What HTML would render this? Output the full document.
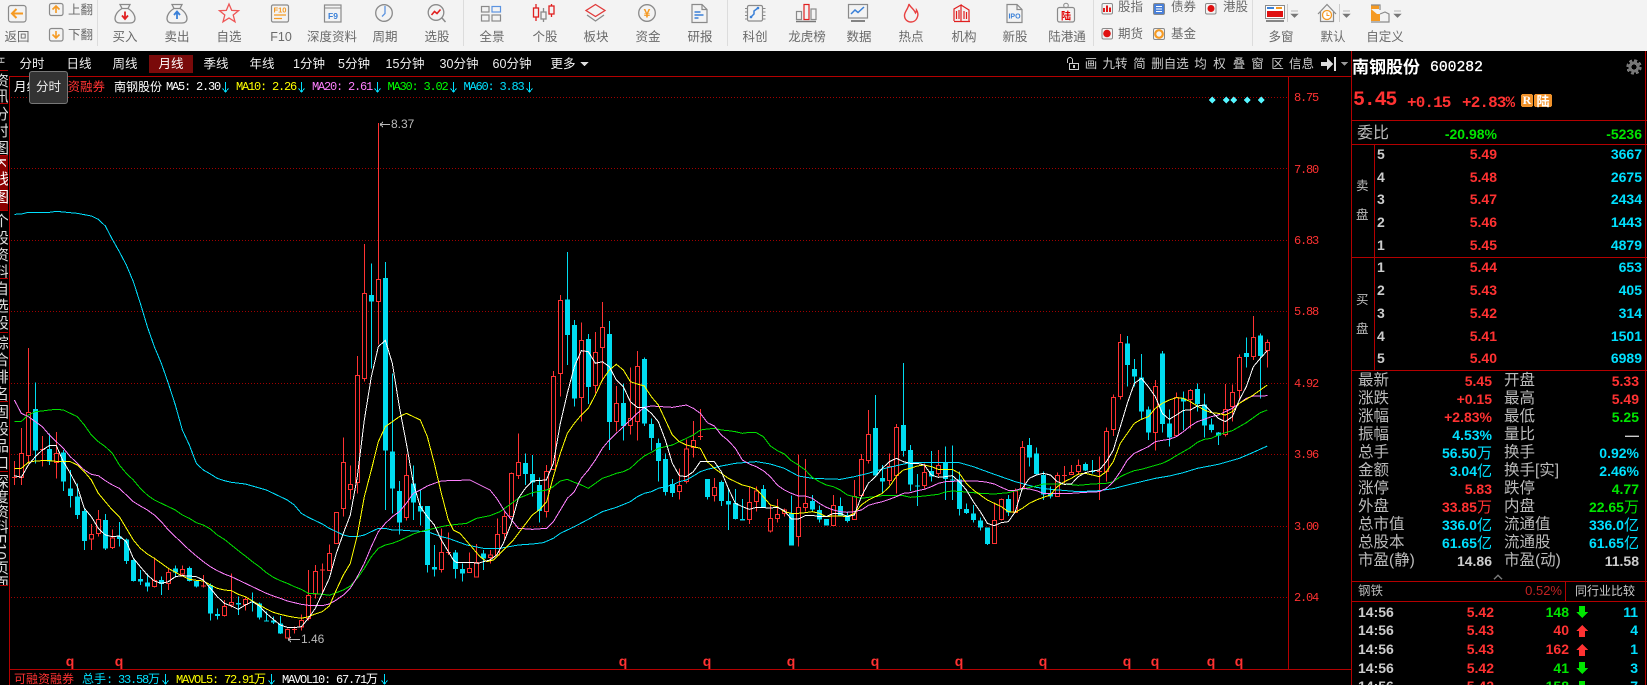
<!DOCTYPE html>
<html><head><meta charset="utf-8"><style>
html,body{margin:0;padding:0;width:1647px;height:685px;overflow:hidden;background:#000}
body{position:relative;font-family:"Liberation Sans","Noto Sans CJK SC",sans-serif;color:#fff}
div,span.a{position:absolute;white-space:nowrap}
#tb{left:0;top:0;width:1647px;height:51px;background:#f3f3f3}
#tb div{color:#6a6a6a;font-size:12.5px;line-height:18px;top:28px;transform:translateX(-50%)}
#tb div.s{top:0;transform:none}
.tab{top:55px;line-height:18px;font-size:12.5px;color:#f0f0f0;transform:translateX(-50%)}
.tool{top:55px;line-height:18px;font-size:12.5px;color:#ccc;transform:translateX(-50%)}
.m{font-family:"Liberation Mono","Noto Sans CJK SC",monospace;font-size:12px;letter-spacing:-1.2px;line-height:14px;top:80px}
.ax{font-family:"Liberation Mono",monospace;font-size:12px;letter-spacing:-1.2px;line-height:14px;left:1294px;color:#ff3232}
.q{top:654px;color:#ff3232;font-weight:bold;font-size:14px;line-height:14px;transform:translateX(-50%)}
.st{top:672px;font-size:12px;line-height:14px;font-family:"Liberation Mono","Noto Sans CJK SC",monospace;letter-spacing:-1.2px}
.st u{text-decoration:none;letter-spacing:0;font-family:"Noto Sans CJK SC",sans-serif}
.b{font-weight:bold;font-size:14px;line-height:18px}
.r{color:#ff3232}.c{color:#00e0ff}.g{color:#00e600}.w{color:#ccc}
.l{font-size:15.5px;line-height:18px;color:#bbb;left:1358px}
.l2{font-size:15.5px;line-height:18px;color:#bbb;left:1504px}
.b i{font-style:normal;font-weight:normal;font-size:15px}
#lb{left:0;top:51px;width:8px;height:540px;overflow:hidden}
.vt{left:0;width:8px;overflow:hidden;border-bottom:1px solid #b40000;box-sizing:border-box;color:#ddd;font-size:15px}
.vt span{position:absolute;left:-7px;top:2px;writing-mode:vertical-rl;line-height:15px;white-space:nowrap}
</style></head><body>
<svg width="1647" height="685" style="position:absolute;left:0;top:0" xmlns="http://www.w3.org/2000/svg" shape-rendering="crispEdges">
<g stroke="#a00000" stroke-dasharray="1 2" stroke-width="1">
<path d="M11 97.5H1288M11 168.5H1288M11 240.5H1288M11 311.5H1288M11 383.5H1288M11 454.5H1288M11 526.5H1288M11 597.5H1288"/>
</g>
<g stroke="#b40000" stroke-width="1" fill="none">
<path d="M9.5 76V685M9 76.5H1351M1288.5 76V669M9 669.5H1351M1351.5 51V685M1645.5 51V685M1351 120.5H1647M1351 144.5H1647M1351 257.5H1647M1351 370.5H1647M1374.5 144V370M1351 581.5H1647M1351 601.5H1647M1565.5 581V601"/>
</g>
<!-- zoom-6 candles -->
<g transform="translate(0 200) scale(.33333)">
<path fill="none" stroke="#ff3232" stroke-width="3" d="M43 783V855M36 833h15M64 684V855M85 444V790M127 708V800M120 748h15M169 696V836M274 972V1050M295 930V1010M337 988V1047M463 1073V1163M505 1105V1170M547 1097V1130M610 1125V1163M603 1158h15M673 1200V1250M694 1120V1222M736 1190V1232M862 1285V1316M883 1280V1300M876 1288h15M904 1243V1292M925 1110V1262M946 1095V1195M967 1090V1182M960 1110h15M988 1033V1112M1009 937V1031M1030 712V950M1051 797V898M1072 468V880M1093 132V545M1135 -231V433M1219 762V962M1324 985V1118M1345 997V1065M1338 1057h15"/>
<path fill="#000" stroke="#ff3232" stroke-width="3" d="M58 760h12v73h-12zM79 637h12v130h-12zM163 760h12v27h-12zM268 1003h12v14h-12zM289 958h12v43h-12zM331 1014h12v29h-12zM457 1141h12v19h-12zM499 1118h12v32h-12zM541 1108h12v14h-12zM667 1220h12v26h-12zM688 1208h12v7h-12zM730 1198h12v16h-12zM856 1288h12v26h-12zM898 1262h12v19h-12zM919 1187h12v68h-12zM940 1114h12v68h-12zM982 1060h12v51h-12zM1003 937h12v94h-12zM1024 787h12v138h-12zM1045 853h12v15h-12zM1066 527h12v321h-12zM1087 281h12v255h-12zM1129 238h12v66h-12zM1213 826h12v127h-12zM1318 1057h12v52h-12z"/>
<path fill="none" stroke="#00dcf0" stroke-width="3" d="M106 548V790M148 700V795M190 750V873M211 810V923M232 850V957M253 925V1050M316 942V1050M358 966V1040M379 1015V1092M400 1078V1145M421 1110V1155M442 1120V1175M484 1130V1185M526 1097V1133M568 1100V1145M589 1140V1162M631 1150V1262M652 1225V1258M715 1190V1245M757 1177V1235M778 1208V1258M799 1235V1265M820 1250V1272M841 1248V1302M1114 190V505M1156 186V930M1177 520V940M1198 843V1003M1240 796V960M1261 870V977M1282 918V1118M1303 1035V1130"/>
<path fill="none" stroke="#00dcf0" stroke-width="15" d="M106 627V752M148 747V785M190 757V845M211 865V888M232 890V945M253 933V1023M316 960V1045M358 1010V1017M379 1018V1083M400 1080V1143M421 1137V1145M442 1147V1160M484 1140V1152M526 1105V1117M568 1104V1143M589 1143V1160M631 1155V1241M652 1242V1248M715 1209V1214M757 1204V1208M778 1210V1252M799 1261V1264M820 1261V1267M841 1270V1301M1114 285V305M1156 234V752M1177 754V866M1198 873V968M1240 850V908M1261 918V935M1282 918V1095M1303 1101V1109"/>
</g>
<!-- zoom-7 candles -->
<g transform="translate(450 100) scale(.33333)">
<path fill="none" stroke="#ff3232" stroke-width="3" d="M58 1358V1418M79 1332V1431M121 1350V1390M142 1255V1365M163 1235V1320M184 1117V1250M205 1000V1137M289 1095V1253M310 813V1110M331 585V890M394 667V965M436 696V880M457 606V843M499 858V995M541 803V1003M562 753V1022M688 1105V1198M709 1018V1150M730 963V1073M751 927V1020M744 1010h15M793 1134V1205M898 1160V1272M919 1160V1235M961 1215V1298M982 1197V1268M1003 1225V1250M1045 1063V1340M1066 1077V1235M1150 1185V1277M1213 1140V1258M1234 1062V1190M1255 930V1090M1318 1060V1155M1339 972V1180"/>
<path fill="#000" stroke="#ff3232" stroke-width="3" d="M52 1405h12v13h-12zM73 1388h12v43h-12zM115 1365h12v8h-12zM136 1303h12v62h-12zM157 1250h12v50h-12zM178 1120h12v130h-12zM199 1087h12v40h-12zM283 1114h12v121h-12zM304 829h12v279h-12zM325 601h12v220h-12zM388 721h12v172h-12zM430 757h12v100h-12zM451 682h12v61h-12zM493 910h12v55h-12zM535 955h12v22h-12zM556 799h12v166h-12zM682 1156h12v18h-12zM703 1047h12v97h-12zM724 1021h12v21h-12zM787 1162h12v25h-12zM892 1207h12v51h-12zM913 1173h12v32h-12zM955 1255h12v38h-12zM976 1243h12v13h-12zM997 1230h12v10h-12zM1039 1222h12v88h-12zM1060 1210h12v13h-12zM1144 1216h12v61h-12zM1207 1190h12v68h-12zM1228 1078h12v109h-12zM1249 1003h12v79h-12zM1312 1100h12v41h-12zM1333 982h12v145h-12z"/>
<path fill="none" stroke="#00dcf0" stroke-width="3" d="M16 1350V1435M37 1390V1445M100 1350V1410M226 1060V1155M247 1065V1190M268 1132V1268M352 456V795M373 660V920M415 702V912M478 663V1050M520 850V1022M583 772V978M604 955V1052M625 1015V1145M646 1060V1187M667 1137V1191M772 1137V1198M814 1142V1218M835 1168V1290M856 1167V1258M877 1197V1262M940 1155V1222M1024 1187V1337M1087 1185V1235M1108 1217V1268M1129 1257V1277M1171 1192V1250M1192 1235V1268M1276 885V1127M1297 1095V1180"/>
<path fill="none" stroke="#00dcf0" stroke-width="15" d="M16 1357V1407M37 1407V1420M100 1360V1375M226 1089V1122M247 1122V1148M268 1155V1233M352 598V705M373 675V896M415 717V861M478 702V966M520 909V978M583 777V970M604 972V1014M625 1029V1083M646 1077V1176M667 1152V1179M772 1137V1191M814 1146V1203M835 1203V1214M856 1209V1257M877 1257V1261M940 1167V1222M1024 1240V1337M1087 1203V1228M1108 1230V1258M1129 1257V1277M1171 1218V1246M1192 1245V1263M1276 984V1127M1297 1134V1145"/>
</g>
<!-- zoom-8 candles -->
<g transform="translate(880 280) scale(.33333)">
<path fill="none" stroke="#ff3232" stroke-width="3" d="M133 550V625M175 510V590M343 668V792M364 655V722M406 625V698M427 483V630M532 578V650M553 558V610M546 587h15M574 555V585M595 538V585M658 530V660M651 575h15M679 442V605M700 343V468M721 162V358M826 300V512M889 337V470M931 327V445M1036 312V470M1057 313V425M1078 223V360M1120 108V240M1162 178V263"/>
<path fill="#000" stroke="#ff3232" stroke-width="3" d="M127 577h12v40h-12zM169 556h12v25h-12zM337 721h12v70h-12zM358 658h12v61h-12zM400 633h12v64h-12zM421 502h12v125h-12zM526 586h12v64h-12zM568 577h12v6h-12zM589 556h12v19h-12zM673 455h12v120h-12zM694 352h12v96h-12zM715 187h12v163h-12zM820 320h12v138h-12zM883 353h12v114h-12zM925 331h12v27h-12zM1030 388h12v75h-12zM1051 338h12v42h-12zM1072 232h12v99h-12zM1114 172h12v58h-12zM1156 187h12v25h-12z"/>
<path fill="none" stroke="#00dcf0" stroke-width="3" d="M70 249V530M91 495V633M112 582V678M105 618h15M154 513V605M196 500V660M217 497V660M210 600h15M238 575V707M259 670V702M280 675V728M301 712V752M322 745V795M385 645V708M448 474V560M469 502V587M490 575V660M511 620V655M616 547V573M637 540V580M630 575h15M742 168V320M763 237V320M784 222V420M805 380V480M847 213V458M868 388V500M910 335V450M952 310V395M973 340V473M994 415V458M1015 456V495M1099 172V263M1141 160V355"/>
<path fill="none" stroke="#00dcf0" stroke-width="15" d="M70 435V513M91 510V614M154 573V590M196 547V597M238 598V687M259 687V699M280 700V720M301 721V743M322 742V792M385 657V697M448 495V533M469 520V582M490 585V643M511 640V650M616 552V572M742 190V255M763 267V290M784 292V395M805 388V458M847 220V432M868 430V473M910 355V365M952 327V372M973 373V437M994 433V450M1015 457V466M1099 219V231M1141 166V228"/>
</g>
<!-- MA lines -->
<g fill="none" stroke-width="3">
<g transform="translate(0 200) scale(.33333)">
<polyline stroke="#00e0ff" points="43,43 64,42 85,37 106,37 148,37 169,34 190,36 232,40 274,48 295,58 316,78 337,118 358,155 379,195 400,245 421,310 442,380 463,440 484,490 505,550 526,615 547,690 568,735 589,790 610,810 631,822 652,835 673,842 694,847 736,852 757,858 778,864 799,870 820,880 841,890 862,900 883,915 904,940 925,952 946,962 967,972 988,985 1009,995 1030,1005 1051,1010 1072,1010 1093,1005 1114,995 1135,985 1156,985 1177,990 1198,990 1240,993 1282,995 1324,1010 1345,1015"/>
<polyline stroke="#00e000" points="43,664 64,664 85,645 106,635 127,633 148,630 169,628 190,630 211,640 232,650 253,675 274,705 295,725 316,740 337,760 358,795 379,820 400,840 421,865 442,885 463,900 484,910 505,920 526,930 547,945 568,955 589,968 610,975 631,987 652,1005 673,1018 694,1035 715,1052 736,1068 757,1085 778,1100 799,1118 820,1132 841,1142 862,1150 883,1160 904,1168 925,1180 946,1181 967,1183 988,1186 1009,1178 1030,1170 1051,1158 1072,1135 1093,1105 1114,1070 1135,1045 1156,1035 1177,1030 1198,1022 1219,1012 1240,1002 1261,995 1282,990 1303,985 1324,980 1345,976"/>
<polyline stroke="#ff80ff" points="43,600 64,640 85,650 106,665 127,680 148,705 169,725 190,745 211,770 232,790 253,810 274,823 295,827 316,842 337,855 358,865 379,885 400,905 421,918 442,930 463,945 484,965 505,990 526,1010 547,1030 568,1050 589,1068 610,1085 631,1100 652,1112 673,1122 694,1130 715,1140 736,1150 757,1160 778,1170 799,1180 820,1188 841,1195 862,1203 883,1208 904,1213 925,1216 946,1217 967,1217 988,1212 1009,1200 1030,1185 1051,1165 1072,1130 1093,1090 1114,1040 1135,995 1156,970 1177,950 1198,935 1219,910 1240,880 1261,870 1282,858 1303,850 1324,843 1345,842"/>
<polyline stroke="#ffff00" points="43,805 64,805 85,787 106,783 127,782 148,782 169,784 190,784 211,785 232,795 253,815 274,840 295,880 316,905 337,930 358,950 379,985 400,1020 421,1045 442,1062 463,1075 484,1090 505,1105 526,1117 547,1128 568,1138 589,1141 610,1143 631,1155 652,1165 673,1170 694,1172 715,1183 736,1190 757,1203 778,1215 799,1227 820,1237 841,1243 862,1248 883,1252 904,1255 925,1250 946,1242 967,1235 988,1218 1009,1170 1030,1125 1051,1090 1072,1005 1093,890 1114,810 1135,725 1156,680 1177,665 1198,650 1219,640 1240,650 1261,660 1282,710 1303,790 1324,880 1345,960"/>
<polyline stroke="#ffffff" points="43,827 64,832 85,795 106,770 127,750 148,737 169,737 190,785 211,820 232,860 253,925 274,950 295,985 316,1005 337,1010 358,1008 379,1025 400,1075 421,1100 442,1125 463,1143 484,1150 505,1145 526,1130 547,1127 568,1128 589,1130 610,1140 631,1165 652,1190 673,1210 694,1218 715,1228 736,1215 757,1205 778,1218 799,1240 820,1258 841,1275 862,1282 883,1283 904,1280 925,1255 946,1225 967,1180 988,1135 1009,1060 1030,1000 1051,945 1072,830 1093,660 1114,530 1135,440 1156,421 1177,490 1198,620 1219,730 1240,850 1261,920 1282,950 1303,975 1324,1020 1345,1055"/>
</g>
<g transform="translate(450 100) scale(.33333)">
<polyline stroke="#00e0ff" points="-5,1315 50,1335 100,1345 150,1345 205,1335 247,1332 280,1328 310,1315 331,1300 373,1280 415,1258 457,1235 499,1222 541,1205 562,1190 583,1180 604,1175 625,1165 667,1155 688,1145 709,1140 730,1128 751,1115 772,1108 814,1098 856,1090 919,1085 961,1092 1003,1105 1045,1128 1087,1135 1171,1138 1213,1130 1255,1120 1297,1107 1339,1097"/>
<polyline stroke="#00e000" points="-5,1276 50,1270 80,1255 120,1247 150,1235 185,1210 205,1195 247,1178 290,1170 310,1160 331,1143 352,1138 373,1147 394,1155 415,1165 436,1150 457,1135 478,1128 499,1120 520,1115 541,1105 562,1085 583,1068 604,1057 625,1045 646,1040 667,1035 688,1025 709,1015 730,1005 751,990 772,987 793,985 814,990 835,992 856,995 877,1000 898,997 919,998 940,1010 961,1038 982,1052 1003,1062 1024,1082 1045,1095 1066,1110 1087,1132 1108,1145 1129,1155 1150,1160 1171,1170 1192,1185 1213,1190 1234,1195 1255,1192 1276,1190 1297,1187 1339,1187"/>
<polyline stroke="#ff80ff" points="-5,1142 60,1140 80,1150 120,1170 140,1195 165,1235 205,1285 247,1288 290,1285 310,1265 331,1230 352,1195 373,1175 394,1135 415,1110 436,1080 457,1045 478,1020 499,1000 520,980 541,960 562,940 583,922 604,918 667,922 709,915 730,925 751,940 772,968 793,978 814,1005 835,1022 856,1045 877,1080 898,1092 919,1100 940,1112 961,1130 982,1155 1003,1170 1024,1180 1045,1188 1066,1188 1087,1195 1108,1210 1129,1222 1150,1230 1171,1235 1192,1237 1213,1235 1234,1230 1255,1216 1276,1210 1297,1205 1318,1198 1339,1190"/>
<polyline stroke="#ffff00" points="-5,1260 10,1290 30,1300 60,1335 90,1370 110,1385 130,1380 160,1350 190,1320 205,1300 247,1245 270,1228 290,1205 310,1130 331,1060 352,1000 373,970 394,945 415,925 436,885 457,840 478,810 499,793 520,810 541,845 562,852 583,858 604,890 625,915 646,960 667,1005 688,1025 709,1035 730,1040 751,1045 772,1085 793,1105 814,1120 835,1135 856,1145 877,1155 898,1160 919,1168 940,1190 961,1215 982,1220 1003,1235 1024,1240 1045,1240 1066,1238 1087,1235 1108,1240 1129,1250 1150,1248 1171,1248 1192,1250 1213,1240 1234,1215 1255,1200 1276,1190 1297,1180 1318,1160 1339,1130"/>
<polyline stroke="#ffffff" points="-5,1355 10,1380 20,1388 70,1388 85,1390 100,1385 120,1380 140,1365 160,1330 184,1270 205,1195 226,1165 247,1143 289,1140 310,1090 331,970 352,880 373,800 394,752 415,755 436,790 457,785 478,800 499,840 520,860 541,905 562,922 583,922 604,940 625,965 646,1020 667,1090 688,1127 709,1130 730,1115 751,1085 793,1085 814,1115 835,1165 856,1210 877,1220 898,1228 919,1222 961,1224 982,1222 1003,1232 1024,1257 1045,1257 1066,1247 1087,1246 1108,1250 1129,1250 1150,1240 1171,1240 1192,1250 1213,1245 1234,1190 1255,1150 1276,1130 1297,1105 1318,1085 1339,1075"/>
</g>
<g transform="translate(880 280) scale(.33333)">
<polyline stroke="#00e0ff" points="49,557 91,548 133,548 175,548 217,548 238,548 280,560 343,583 406,605 469,622 511,628 595,635 658,632 700,626 742,615 784,605 826,595 868,588 910,578 952,565 1015,553 1078,535 1120,517 1162,498"/>
<polyline stroke="#00e000" points="49,647 70,647 91,652 133,648 175,643 196,636 217,633 259,636 301,640 343,642 385,638 406,632 427,628 448,622 469,618 490,612 511,612 553,612 595,616 637,612 679,610 700,605 721,590 742,580 763,572 784,568 805,562 826,556 847,550 868,540 889,527 910,515 931,503 952,487 973,478 994,475 1015,465 1036,458 1057,452 1078,440 1099,428 1120,413 1141,398 1162,390"/>
<polyline stroke="#ff80ff" points="49,650 70,640 91,638 112,632 133,628 154,620 175,610 196,605 238,603 280,603 301,604 322,607 343,612 364,622 385,631 406,631 427,625 448,627 469,632 490,640 532,640 574,640 616,637 658,635 679,625 700,605 721,575 742,540 763,520 784,510 805,500 826,485 847,481 868,478 889,470 910,455 931,438 952,425 973,418 994,410 1015,405 1036,395 1057,385 1078,370 1099,355 1120,348 1141,348 1162,347"/>
<polyline stroke="#ffff00" points="49,588 70,570 91,565 112,558 133,555 154,560 175,568 196,568 217,568 238,580 259,610 280,630 301,645 322,660 343,670 364,680 385,695 406,697 427,685 448,670 469,660 490,652 511,645 532,620 553,605 574,595 595,582 616,580 637,585 658,590 679,575 700,545 721,490 742,460 763,430 784,418 805,410 826,385 847,370 868,360 889,353 910,355 931,365 952,378 973,390 994,398 1015,400 1036,405 1057,395 1078,370 1099,358 1120,345 1141,330 1162,315"/>
<polyline stroke="#ffffff" points="49,535 70,545 91,550 112,550 133,555 154,585 175,592 196,590 217,587 238,605 259,630 280,665 301,695 322,730 343,737 364,728 385,725 406,695 427,625 448,595 469,585 490,580 511,585 532,605 553,613 574,612 595,590 616,578 637,573 658,570 679,545 700,510 721,440 742,370 763,310 784,295 805,320 826,350 847,400 868,418 889,405 910,391 931,390 952,378 973,375 994,395 1015,415 1036,425 1057,410 1078,360 1099,320 1120,260 1141,235 1162,212"/>
</g>
</g>
<!-- high/low markers -->
<path d="M380 124.5h10M380 124.5l3-2.5M380 124.5l3 2.5M288 639.5h12M288 639.5l3-2.5M288 639.5l3 2.5" stroke="#bbb" fill="none"/>
<!-- diamonds -->
<path fill="#55f5ff" d="M1212 96.5l3.5 3.5-3.5 3.5-3.5-3.5zM1226 96.5l3.5 3.5-3.5 3.5-3.5-3.5zM1233.5 96.5l3.5 3.5-3.5 3.5-3.500-3.500zM1247 96.5l3.5 3.5-3.5 3.5-3.5-3.5zM1261 96.5l3.5 3.5-3.5 3.5-3.5-3.5z"/>
<!-- header arrows -->
<g fill="none" stroke-width="1">
<path stroke="#00e0ff" d="M225.5 82v10M222.5 88.5l3 3.5 3-3.5M301.5 82v10M298.5 88.5l3 3.5 3-3.5M377.5 82v10M374.5 88.5l3 3.5 3-3.5M453.5 82v10M450.5 88.5l3 3.5 3-3.5M529.5 82v10M526.5 88.5l3 3.5 3-3.5M165.5 674v10M162.5 680.5l3 3.5 3-3.5M271.5 674v10M268.5 680.5l3 3.5 3-3.5M384.5 674v10M381.5 680.5l3 3.5 3-3.5"/>
</g>
<!-- lock -->
<path d="M1067.5 63v-3a2.500 2.500 0 0 1 5 0v3" fill="none" stroke="#ccc"/>
<rect x="1069.500" y="63.500" width="9" height="6" fill="none" stroke="#ccc"/>
<rect x="1073" y="65" width="2" height="3" fill="#ccc"/>
<path d="M1321 62h6v-4l6 6-6 6v-4h-6zM1334 57h2v14h-2z" fill="#ddd"/>
<path d="M1341 62h7l-3.5 4z" fill="#999"/>
<path d="M580 62h9l-4.500 4z" fill="#ddd" />
<!-- gear -->
<circle cx="1634" cy="67" r="4" fill="none" stroke="#777" stroke-width="3"/>
<circle cx="1634" cy="67" r="6.500" fill="none" stroke="#777" stroke-width="2.500" stroke-dasharray="3 2.100"/>
<!-- chevron -->
<path d="M1494 579l4-3.500 4 3.500" fill="none" stroke="#777" stroke-width="1.500"/>
<!-- tick arrows -->
<path fill="#00e600" d="M1579 606h6v6h3l-6 6-6-6h3zM1579 662h6v6h3l-6 6-6-6h3z"/>
<path fill="#ff3232" d="M1582 625l6 6h-3v6h-6v-6h-3zM1582 644l6 6h-3v6h-6v-6h-3z"/>
<path fill="#00e600" d="M1579 681h6v4h-6z"/>
<!-- price tags -->
<rect x="1521" y="94" width="12" height="13" rx="2" fill="#f0922b"/>
<rect x="1534" y="94" width="18" height="13" rx="2" fill="#f0922b"/>
</svg>

<div style="left:1521px;top:93px;width:12px;text-align:center;font:bold 12px/15px 'Liberation Serif',serif;color:#fff">R</div>
<div style="left:1534px;top:93px;width:18px;text-align:center;font:bold 13px/15px 'Noto Sans CJK SC',sans-serif;color:#fff">陆</div>

<div id="tb">
<svg width="1647" height="51" style="position:absolute;left:0;top:0" xmlns="http://www.w3.org/2000/svg">
<g fill="none" stroke="#8a8a8a" stroke-width="1.200">
<rect x="8.500" y="5.500" width="17.500" height="16.500" rx="2.500"/>
<rect x="49.500" y="3.500" width="13.500" height="12" rx="2"/>
<rect x="49.500" y="28.500" width="13.500" height="12.500" rx="2"/>
</g>
<g fill="none" stroke="#f59a23" stroke-width="2">
<path d="M23 13.500H12M16.500 9l-4.500 4.500 4.500 4.500"/>
<path d="M56 13V6.500M52.500 9.500L56 6l3.500 3.500" stroke-width="1.600"/>
<path d="M56 31v6.500M52.500 34.500L56 38l3.500-3.500" stroke-width="1.600"/>
</g>
<path d="M97.500 0v46M463.500 0v46M727.500 0v46M1093.500 0v46M1252.500 0v46" stroke="#dcdcdc" fill="none"/>
<!-- bags -->
<g fill="none" stroke="#8a8a8a" stroke-width="1.300">
<path d="M120 4.500h10l-2 4c5 3 7 7 7 10 0 3-2 4.500-5 4.500h-10c-3 0-5-1.500-5-4.500 0-3 2-7 7-10zM122 8.500h6"/>
<path d="M172 4.500h10l-2 4c5 3 7 7 7 10 0 3-2 4.500-5 4.500h-10c-3 0-5-1.500-5-4.500 0-3 2-7 7-10zM174 8.500h6"/>
</g>
<path d="M125 11.500v7M122 15.500l3 3.500 3-3.500" stroke="#e02020" stroke-width="1.800" fill="none"/>
<path d="M177 19v-7M174 15l3-3.500 3 3.500" stroke="#3a80d8" stroke-width="1.800" fill="none"/>
<!-- star -->
<polygon points="229,4 231.700,10.400 238.500,10.700 233.200,15 235,21.800 229,18 223,21.800 224.800,15 219.500,10.700 226.300,10.400" fill="none" stroke="#ee5555" stroke-width="1.300"/>
<!-- F10 -->
<rect x="271.500" y="5" width="17" height="17" rx="1.500" fill="none" stroke="#8a8a8a" stroke-width="1.200"/>
<text x="280" y="12.500" font-family="Liberation Sans" font-size="7.500" font-weight="bold" fill="#f59a23" text-anchor="middle">F10</text>
<path d="M274 15h12M274 18.500h8" stroke="#f59a23" fill="none" stroke-width="1.200"/>
<!-- F9 -->
<rect x="324.500" y="5" width="16.500" height="17" fill="none" stroke="#8a8a8a" stroke-width="1.200"/>
<path d="M324.500 8h16.500" stroke="#8a8a8a"/>
<text x="333" y="19" font-family="Liberation Sans" font-size="8.500" font-weight="bold" fill="#3a80d8" text-anchor="middle">F9</text>
<!-- clock -->
<circle cx="384" cy="13" r="8.300" fill="none" stroke="#8a8a8a" stroke-width="1.300"/>
<path d="M385 6v7.500l-3 3" stroke="#5b93e0" fill="none" stroke-width="1.300"/>
<!-- magnifier -->
<circle cx="436" cy="12.500" r="7.800" fill="none" stroke="#8a8a8a" stroke-width="1.300"/>
<path d="M442 18l3.500 4" stroke="#8a8a8a" stroke-width="1.500"/>
<path d="M431.500 15l3-3.500 2.500 2 3.500-4" stroke="#e02020" stroke-width="1.600" fill="none"/>
<!-- overview -->
<g fill="none" stroke="#8a8a8a" stroke-width="1.200">
<rect x="481.500" y="6.500" width="7.500" height="5.500"/><rect x="481.500" y="15" width="7.500" height="6"/><rect x="492" y="15" width="8.500" height="6"/>
<rect x="492" y="6.500" width="8.500" height="5.500" stroke="#5b93e0"/>
</g>
<!-- candles -->
<g fill="none" stroke-width="1.300">
<path d="M536 4v4M536 17v4M551.500 4v2M551.500 14v3" stroke="#e02020"/><rect x="533.500" y="8" width="5" height="9" stroke="#e02020"/>
<path d="M543.500 8v4M543.500 19v3" stroke="#8a8a8a"/><rect x="541" y="12" width="5" height="7" stroke="#8a8a8a"/>
<rect x="549" y="6" width="5" height="8" stroke="#e02020"/>
</g>
<!-- layers -->
<path d="M595.500 4.500l9.500 6-9.500 6-9.500-6z" fill="none" stroke="#e23a3a" stroke-width="1.300"/>
<path d="M587 15l8.500 6 8.500-6" fill="none" stroke="#8a8a8a" stroke-width="1.300"/>
<!-- coin -->
<circle cx="647" cy="13" r="8.300" fill="none" stroke="#8a8a8a" stroke-width="1.300"/>
<text x="647" y="17.500" font-family="Liberation Sans" font-size="12" font-weight="bold" fill="#f59a23" text-anchor="middle">¥</text>
<!-- report -->
<path d="M692 4.500h10l5 5v13h-15z M702 4.500v5h5" fill="none" stroke="#8a8a8a" stroke-width="1.200"/>
<path d="M694.500 12h6M694.500 15h9M694.500 18h4" stroke="#3a80d8" stroke-width="1.500" fill="none"/>
<!-- chip -->
<rect x="747.500" y="5.500" width="15" height="15.500" rx="1.500" fill="none" stroke="#8a8a8a" stroke-width="1.200"/>
<path d="M745 8.500h2.500M745 12h2.500M745 15.500h2.500M745 19h2.500M763 8.500h2.500M763 12h2.500M763 15.500h2.500M763 19h2.500" stroke="#8a8a8a"/>
<path d="M751 17l3-3v-3l4-3" stroke="#3a80d8" stroke-width="1.500" fill="none"/>
<circle cx="751" cy="17" r="1.300" fill="#3a80d8"/><circle cx="758" cy="8" r="1.300" fill="#3a80d8"/>
<!-- dragon bars -->
<g fill="none" stroke-width="1.200">
<rect x="796.500" y="11.500" width="5" height="8" stroke="#8a8a8a"/><rect x="804" y="4.500" width="5" height="15" stroke="#e02020"/><rect x="811" y="9" width="5" height="10.500" stroke="#8a8a8a"/>
</g>
<path d="M796 21.500h20" stroke="#777" stroke-width="1.600"/>
<!-- monitor -->
<rect x="848.500" y="4.500" width="19" height="13.500" fill="none" stroke="#8a8a8a" stroke-width="1.200"/>
<path d="M851 14l4-4 3 2.500 6-5.500" fill="none" stroke="#3a80d8" stroke-width="1.500"/>
<path d="M851 21h14" stroke="#777" stroke-width="1.800"/>
<!-- flame -->
<path d="M909 4c1 3 5 5 6.500 9 .8-1 1-2 1-3 2 3 1.500 6 .5 8-1 2.500-3.500 4-6 4-3.500 0-6.500-2.500-6.500-6.500 0-4 3.500-6 4.500-11.500z" fill="none" stroke="#e84040" stroke-width="1.400"/>
<!-- building -->
<g fill="none" stroke="#e02020" stroke-width="1.200">
<path d="M954 21V9l7-4v16M961 5l8 5v11M954 21.500h16"/>
<path d="M956.500 11v8M959 10v9M964 11v8M966.500 12v7"/>
</g>
<!-- IPO -->
<path d="M1007 4.500h10l5 5v13h-15z M1017 4.500v5h5" fill="none" stroke="#8a8a8a" stroke-width="1.200"/>
<text x="1014.500" y="18.500" font-family="Liberation Sans" font-size="7" font-weight="bold" fill="#3a80d8" text-anchor="middle">IPO</text>
<!-- lugangtong -->
<rect x="1057.500" y="7.500" width="17" height="14.500" rx="2" fill="none" stroke="#8a8a8a" stroke-width="1.200"/>
<circle cx="1066" cy="5.500" r="2.300" fill="none" stroke="#8a8a8a"/>
<text x="1066" y="19.500" font-family="Noto Sans CJK SC" font-size="10" font-weight="bold" fill="#e00000" text-anchor="middle">陆</text>
<!-- small icons -->
<g fill="none" stroke="#8a8a8a">
<rect x="1102" y="3.500" width="10.500" height="10.500" rx="1.500"/><rect x="1102" y="28.500" width="10.500" height="10.500" rx="1.500"/>
<rect x="1205.500" y="3.500" width="10.500" height="10.500" rx="1.500"/>
</g>
<path d="M1104 12V8M1107 12V5.500M1110 12V7.500" stroke="#e00000" stroke-width="1.800" fill="none"/>
<circle cx="1107" cy="33.500" r="3.800" fill="#e01010"/>
<rect x="1153.500" y="3.500" width="11" height="11" rx="1.500" fill="#4a80d8" stroke="#8a8a8a"/>
<path d="M1156 6.500h6M1156 9h6M1156 11.500h6" stroke="#fff" fill="none"/>
<circle cx="1211" cy="8.500" r="3.500" fill="#e01010"/>
<rect x="1153.500" y="28.500" width="11" height="11" rx="1.500" fill="none" stroke="#8a8a8a"/>
<circle cx="1159" cy="34" r="3.800" fill="none" stroke="#f59a23" stroke-width="2.200"/>
<!-- multi window -->
<rect x="1265.500" y="5.500" width="19" height="13" fill="#fff" stroke="#8a8a8a"/>
<rect x="1267" y="11" width="16" height="6" fill="#e01010"/>
<path d="M1267 8h7" stroke="#3a80d8" stroke-width="2"/><path d="M1276 8h6" stroke="#f59a23" stroke-width="2"/>
<path d="M1266 21h18" stroke="#777" stroke-width="1.800"/>
<path d="M1287.500 4v18M1339.500 4v18" stroke="#ccc"/>
<path d="M1291 11h7M1291 14h7l-3.500 3.500z" stroke="#777" fill="#777" stroke-width=".6"/>
<path d="M1343 11h7M1343 14h7l-3.500 3.500z" stroke="#777" fill="#777" stroke-width=".6"/>
<path d="M1394 11h7M1394 14h7l-3.500 3.500z" stroke="#777" fill="#777" stroke-width=".6"/>
<!-- house -->
<path d="M1318 14l9-9.500 9 9.500M1320.500 12v9.500h13V12" fill="none" stroke="#8a8a8a" stroke-width="1.200"/>
<circle cx="1327" cy="15" r="4.500" fill="#fff" stroke="#f59a23" stroke-width="1.300"/>
<path d="M1327 12.500v3h2.500" stroke="#f59a23" fill="none"/>
<!-- puzzle -->
<path d="M1371 5h8v4h-8zM1371 9v12h9v-7h-3z" fill="#f59a23"/>
<path d="M1371 5h9v5M1380 14l5-2 4 2v8h-18" fill="none" stroke="#8a8a8a" stroke-width="1.200"/>
</svg>
<div style="left:17px">返回</div>
<div class="s" style="left:68px;top:1px;line-height:18px">上翻</div>
<div class="s" style="left:68px;top:26px;line-height:18px">下翻</div>
<div style="left:125px">买入</div><div style="left:177px">卖出</div><div style="left:229px">自选</div><div style="left:281px">F10</div><div style="left:332px">深度资料</div><div style="left:385px">周期</div><div style="left:437px">选股</div>
<div style="left:492px">全景</div><div style="left:545px">个股</div><div style="left:596px">板块</div><div style="left:648px">资金</div><div style="left:700px">研报</div>
<div style="left:755px">科创</div><div style="left:807px">龙虎榜</div><div style="left:859px">数据</div><div style="left:911px">热点</div><div style="left:964px">机构</div><div style="left:1015px">新股</div><div style="left:1067px">陆港通</div>
<div class="s" style="left:1118px;top:-2px;line-height:18px">股指</div><div class="s" style="left:1171px;top:-2px;line-height:18px">债券</div><div class="s" style="left:1223px;top:-2px;line-height:18px">港股</div>
<div class="s" style="left:1118px;top:25px;line-height:18px">期货</div><div class="s" style="left:1171px;top:25px;line-height:18px">基金</div>
<div style="left:1281px">多窗</div><div style="left:1333px">默认</div><div style="left:1385px">自定义</div>
</div>

<div id="lb">
<div class="vt" style="top:0;height:20px;color:#ddd"><span style="top:6px;font-size:9px">H</span></div>
<div class="vt" style="top:20px;height:33px"><span>资讯</span></div>
<div class="vt" style="top:53px;height:52px"><span style="letter-spacing:2px">分时图</span></div>
<div class="vt" style="top:105px;height:55px;background:#8b0000;color:#fff"><span style="letter-spacing:3px">K线图</span></div>
<div class="vt" style="top:160px;height:68px"><span style="letter-spacing:2px">个股资料</span></div>
<div class="vt" style="top:228px;height:54px"><span style="letter-spacing:2px">自选股</span></div>
<div class="vt" style="top:282px;height:69px"><span style="letter-spacing:2px">综合排名</span></div>
<div class="vt" style="top:351px;height:70px"><span style="letter-spacing:2px">固股品口</span></div>
<div class="vt" style="top:421px;height:114px"><span>深度资料F10页面</span></div>
</div>

<div class="tab" style="left:32px">分时</div><div class="tab" style="left:79px">日线</div><div class="tab" style="left:125px">周线</div>
<div style="left:149px;top:55px;width:44px;height:18px;background:#7a0a0a;text-align:center;font-size:12.5px;line-height:18px">月线</div>
<div class="tab" style="left:216px">季线</div><div class="tab" style="left:262px">年线</div><div class="tab" style="left:309px">1分钟</div><div class="tab" style="left:354px">5分钟</div><div class="tab" style="left:405px">15分钟</div><div class="tab" style="left:459px">30分钟</div><div class="tab" style="left:512px">60分钟</div><div class="tab" style="left:563px">更多</div>

<div class="tool" style="left:1091px">画</div><div class="tool" style="left:1115px">九转</div><div class="tool" style="left:1139.500px">简</div><div class="tool" style="left:1170px">删自选</div><div class="tool" style="left:1200.500px">均</div><div class="tool" style="left:1219.500px">权</div><div class="tool" style="left:1239px">叠</div><div class="tool" style="left:1257.500px">窗</div><div class="tool" style="left:1277.500px">区</div><div class="tool" style="left:1301.500px">信息</div>

<div style="left:14px;top:79px;font-size:12.5px;line-height:16px">月线</div>
<div class="r" style="right:1542px;top:79px;font-size:12.500px;line-height:16px">可融资融券</div>
<div style="left:114px;top:79px;font-size:12px;line-height:16px">南钢股份</div>
<div class="m" style="left:166px;color:#fff">MA5: 2.30</div>
<div class="m" style="left:236px;color:#ff0">MA10: 2.26</div>
<div class="m" style="left:312px;color:#ff80ff">MA20: 2.61</div>
<div class="m" style="left:387.500px;color:#0f0">MA30: 3.02</div>
<div class="m" style="left:463.500px;color:#00e0ff">MA60: 3.83</div>

<div style="left:29px;top:71px;width:37px;height:31px;background:#333;border:1px solid #777;border-radius:3px;text-align:center;font-size:12.5px;line-height:30px;color:#eee">分时</div>

<div class="ax" style="top:91px">8.75</div><div class="ax" style="top:163px">7.80</div><div class="ax" style="top:234px">6.83</div><div class="ax" style="top:305px">5.88</div><div class="ax" style="top:377px">4.92</div><div class="ax" style="top:448px">3.96</div><div class="ax" style="top:520px">3.00</div><div class="ax" style="top:591px">2.04</div>

<div style="left:391px;top:117px;font-size:12px;line-height:14px;color:#bbb">8.37</div>
<div style="left:301px;top:632px;font-size:12px;line-height:14px;color:#bbb">1.46</div>

<div class="q" style="left:70px">q</div><div class="q" style="left:119px">q</div><div class="q" style="left:623px">q</div><div class="q" style="left:707px">q</div><div class="q" style="left:791px">q</div><div class="q" style="left:875px">q</div><div class="q" style="left:959px">q</div><div class="q" style="left:1043px">q</div><div class="q" style="left:1127px">q</div><div class="q" style="left:1155px">q</div><div class="q" style="left:1211px">q</div><div class="q" style="left:1239px">q</div>

<div class="st r" style="left:14px;letter-spacing:0;font-family:'Liberation Sans','Noto Sans CJK SC',sans-serif">可融资融券</div>
<div class="st c" style="left:82px"><u>总手</u>: 33.58<u>万</u></div>
<div class="st" style="left:176px;color:#ff0">MAVOL5: 72.91<u>万</u></div>
<div class="st" style="left:282px;color:#fff">MAVOL10: 67.71<u>万</u></div>

<!-- right panel -->
<div style="left:1352px;top:58px;font-size:17px;font-weight:bold;line-height:20px">南钢股份</div>
<div style="left:1430px;top:59px;font:14.700px/18px 'Liberation Mono',monospace;-webkit-text-stroke:.3px #fff">600282</div>
<div class="r" style="left:1353px;top:90px;font:bold 20px/22px 'Liberation Mono',monospace;letter-spacing:-1.2px">5.45</div>
<div class="r" style="left:1407px;top:94px;font:bold 16px/18px 'Liberation Mono',monospace;letter-spacing:-.9px">+0.15</div>
<div class="r" style="left:1462px;top:94px;font:bold 16px/18px 'Liberation Mono',monospace;letter-spacing:-.9px">+2.83%</div>

<div style="left:1357px;top:125px;font-size:16px;line-height:18px;color:#bbb">委比</div>
<div class="b g" style="right:150px;top:125px">-20.98%</div>
<div class="b g" style="right:5px;top:125px">-5236</div>

<div style="left:1356px;top:176px;font-size:12.5px;line-height:20px;color:#bbb">卖</div>
<div style="left:1356px;top:205px;font-size:12.5px;line-height:20px;color:#bbb">盘</div>
<div style="left:1356px;top:290px;font-size:12.5px;line-height:20px;color:#bbb">买</div>
<div style="left:1356px;top:319px;font-size:12.5px;line-height:20px;color:#bbb">盘</div>

<div class="b w" style="left:1377px;top:145px">5</div><div class="b r" style="right:150px;top:145px">5.49</div><div class="b c" style="right:5px;top:145px">3667</div>
<div class="b w" style="left:1377px;top:168px">4</div><div class="b r" style="right:150px;top:168px">5.48</div><div class="b c" style="right:5px;top:168px">2675</div>
<div class="b w" style="left:1377px;top:190px">3</div><div class="b r" style="right:150px;top:190px">5.47</div><div class="b c" style="right:5px;top:190px">2434</div>
<div class="b w" style="left:1377px;top:213px">2</div><div class="b r" style="right:150px;top:213px">5.46</div><div class="b c" style="right:5px;top:213px">1443</div>
<div class="b w" style="left:1377px;top:236px">1</div><div class="b r" style="right:150px;top:236px">5.45</div><div class="b c" style="right:5px;top:236px">4879</div>
<div class="b w" style="left:1377px;top:258px">1</div><div class="b r" style="right:150px;top:258px">5.44</div><div class="b c" style="right:5px;top:258px">653</div>
<div class="b w" style="left:1377px;top:281px">2</div><div class="b r" style="right:150px;top:281px">5.43</div><div class="b c" style="right:5px;top:281px">405</div>
<div class="b w" style="left:1377px;top:304px">3</div><div class="b r" style="right:150px;top:304px">5.42</div><div class="b c" style="right:5px;top:304px">314</div>
<div class="b w" style="left:1377px;top:327px">4</div><div class="b r" style="right:150px;top:327px">5.41</div><div class="b c" style="right:5px;top:327px">1501</div>
<div class="b w" style="left:1377px;top:349px">5</div><div class="b r" style="right:150px;top:349px">5.40</div><div class="b c" style="right:5px;top:349px">6989</div>

<div class="l" style="top:372px">最新</div><div class="b r" style="right:155px;top:372px">5.45</div><div class="l2" style="top:372px">开盘</div><div class="b r" style="right:8px;top:372px">5.33</div>
<div class="l" style="top:390px">涨跌</div><div class="b r" style="right:155px;top:390px">+0.15</div><div class="l2" style="top:390px">最高</div><div class="b r" style="right:8px;top:390px">5.49</div>
<div class="l" style="top:408px">涨幅</div><div class="b r" style="right:155px;top:408px">+2.83%</div><div class="l2" style="top:408px">最低</div><div class="b g" style="right:8px;top:408px">5.25</div>
<div class="l" style="top:426px">振幅</div><div class="b c" style="right:155px;top:426px">4.53%</div><div class="l2" style="top:426px">量比</div><div class="b w" style="right:8px;top:426px">—</div>
<div class="l" style="top:444px">总手</div><div class="b c" style="right:155px;top:444px">56.50<i>万</i></div><div class="l2" style="top:444px">换手</div><div class="b c" style="right:8px;top:444px">0.92%</div>
<div class="l" style="top:462px">金额</div><div class="b c" style="right:155px;top:462px">3.04<i>亿</i></div><div class="l2" style="top:462px">换手[实]</div><div class="b c" style="right:8px;top:462px">2.46%</div>
<div class="l" style="top:480px">涨停</div><div class="b r" style="right:155px;top:480px">5.83</div><div class="l2" style="top:480px">跌停</div><div class="b g" style="right:8px;top:480px">4.77</div>
<div class="l" style="top:498px">外盘</div><div class="b r" style="right:155px;top:498px">33.85<i>万</i></div><div class="l2" style="top:498px">内盘</div><div class="b g" style="right:8px;top:498px">22.65<i>万</i></div>
<div class="l" style="top:516px">总市值</div><div class="b c" style="right:155px;top:516px">336.0<i>亿</i></div><div class="l2" style="top:516px">流通值</div><div class="b c" style="right:8px;top:516px">336.0<i>亿</i></div>
<div class="l" style="top:534px">总股本</div><div class="b c" style="right:155px;top:534px">61.65<i>亿</i></div><div class="l2" style="top:534px">流通股</div><div class="b c" style="right:8px;top:534px">61.65<i>亿</i></div>
<div class="l" style="top:552px">市盈(静)</div><div class="b w" style="right:155px;top:552px">14.86</div><div class="l2" style="top:552px">市盈(动)</div><div class="b w" style="right:8px;top:552px">11.58</div>

<div style="left:1358px;top:582px;font-size:12.5px;line-height:18px;color:#bbb">钢铁</div>
<div style="right:85px;top:582px;font-size:13px;line-height:18px;color:#c42222">0.52%</div>
<div style="left:1575px;top:582px;font-size:12px;line-height:18px;color:#ccc">同行业比较</div>

<div class="b w" style="left:1358px;top:603px">14:56</div><div class="b r" style="right:153px;top:603px">5.42</div><div class="b g" style="right:78px;top:603px">148</div><div class="b c" style="right:9px;top:603px">11</div>
<div class="b w" style="left:1358px;top:621px">14:56</div><div class="b r" style="right:153px;top:621px">5.43</div><div class="b r" style="right:78px;top:621px">40</div><div class="b c" style="right:9px;top:621px">4</div>
<div class="b w" style="left:1358px;top:640px">14:56</div><div class="b r" style="right:153px;top:640px">5.43</div><div class="b r" style="right:78px;top:640px">162</div><div class="b c" style="right:9px;top:640px">1</div>
<div class="b w" style="left:1358px;top:659px">14:56</div><div class="b r" style="right:153px;top:659px">5.42</div><div class="b g" style="right:78px;top:659px">41</div><div class="b c" style="right:9px;top:659px">3</div>
<div class="b w" style="left:1358px;top:677px">14:56</div><div class="b r" style="right:153px;top:677px">5.42</div><div class="b g" style="right:78px;top:677px">158</div><div class="b c" style="right:9px;top:677px">7</div>
</body></html>
